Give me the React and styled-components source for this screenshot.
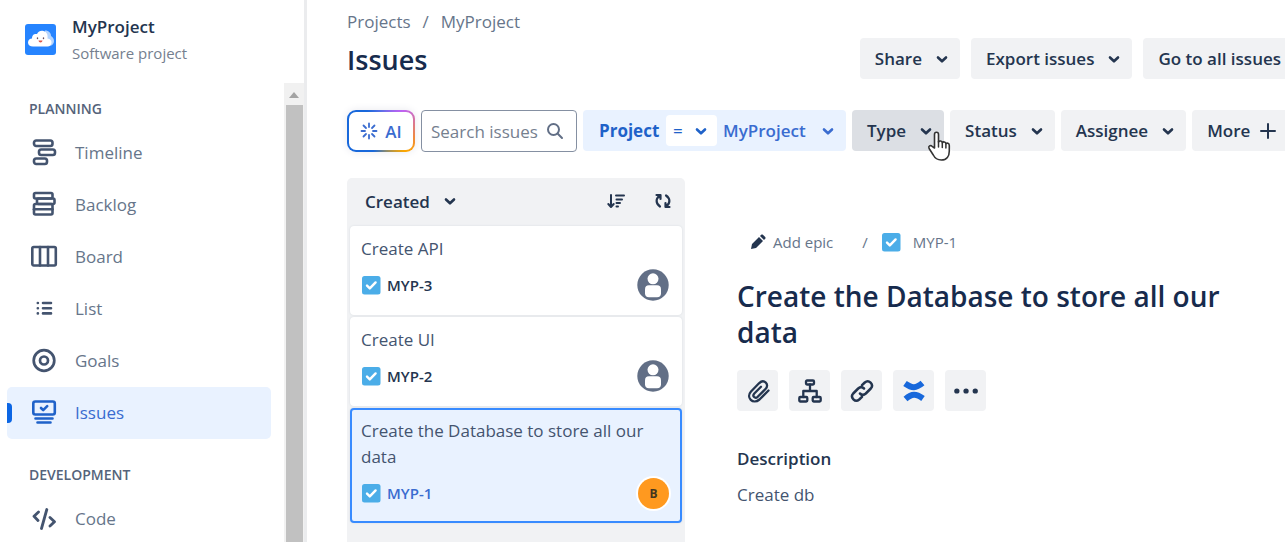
import React from "react"
import styled, { createGlobalStyle } from "styled-components"

const NAVY = "#24354f";
const BLUE = "#1f62c9";
const GREY = "#f1f2f4";

const GlobalStyle = createGlobalStyle`
  * {
    box-sizing: border-box;
  }
  body {
    margin: 0;
    background: #fff;
    color: ${NAVY};
    font-family: "Open Sans", "Noto Sans", sans-serif;
    font-size: 17px;
  }
  button, input {
    font-family: inherit;
    font-size: inherit;
    color: inherit;
  }
  h1, h2, h3, p, ul {
    margin: 0;
    padding: 0;
  }
  svg {
    display: block;
    flex: none;
  }
`;

const Shell = styled.div`
  display: flex;
  height: 100vh;
  overflow: hidden;
`;

/* ---- sidebar ---- */

const Sidebar = styled.aside`
  display: flex;
  flex-direction: column;
  flex: 0 0 307px;
  border-right: 3px solid #ebecee;
`;
const Project_head = styled.div`
  display: flex;
  align-items: center;
  gap: 15px;
  flex: 0 0 83px;
  padding: 0 0 4px 25px;
`;
const Project_name = styled.div`
  font-weight: 600;
  font-size: 17px;
  line-height: 27px;
`;
const Project_kind = styled.div`
  font-size: 15px;
  line-height: 27px;
  color: #75808f;
`;
const Sidebar_body = styled.div`
  display: flex;
  flex: 1;
  min-height: 0;
`;
const Nav = styled.nav`
  flex: 1;
  padding: 0 13px 0 7px;
  overflow: hidden;
`;
const Nav_heading = styled.h3`
  padding: ${props => props.$first ? 16 : 26}px 0 8px 22px;
  font-size: 14px;
  line-height: 20px;
  font-weight: 600;
  color: #55637a;
  text-transform: uppercase;
`;
const Nav_link = styled.a`
  position: relative;
  display: flex;
  align-items: center;
  gap: 17px;
  height: 52px;
  padding: 0 0 2px 23px;
  border-radius: 5px;
  text-decoration: none;
  color: ${props => props.$active ? "#3a6cd0" : "#66758a"};
  background: ${props => props.$active ? "#e9f2ff" : "transparent"};
  svg {
    color: ${props => props.$active ? BLUE : "#44546f"};
  }
  &::before {
    content: "";
    display: ${props => props.$active ? "block" : "none"};
    position: absolute;
    left: 0;
    top: 16px;
    width: 5px;
    height: 20px;
    border-radius: 0 4px 4px 0;
    background: #0c66e4;
  }
`;
const Scrollbar = styled.div`
  display: flex;
  flex-direction: column;
  align-items: center;
  flex: 0 0 20px;
  background: #f1f1f1;
`;
const Scroll_up = styled.div`
  flex: 0 0 22px;
  padding-top: 9px;
`;
const Scroll_thumb = styled.div`
  flex: 1;
  width: 17px;
  background: #c1c1c1;
`;

/* ---- main area ---- */

const Main = styled.main`
  flex: 1;
  min-width: 0;
  overflow: hidden;
`;
const Page = styled.div`
  display: flex;
  flex-direction: column;
  min-width: 990px;
  height: 100%;
  padding-left: 40px;
`;
const Head = styled.header`
  display: flex;
  justify-content: space-between;
  align-items: flex-start;
`;
const Crumbs = styled.div`
  display: flex;
  gap: 12px;
  padding-top: 10px;
  line-height: 24px;
  color: #66758a;
  a {
    color: inherit;
    text-decoration: none;
  }
`;
const Page_title = styled.h1`
  padding-top: 8px;
  font-size: 27px;
  line-height: 36px;
  font-weight: 600;
  color: #172b4d;
`;
const Actions = styled.div`
  display: flex;
  gap: 11px;
  padding-top: 38px;
`;
const Button = styled.button`
  display: flex;
  align-items: center;
  gap: 10px;
  height: 41px;
  padding: 0 ${props => props.$plain ? 16 : 8}px 0 15px;
  border: 0;
  border-radius: 4px;
  background: ${props => props.$pressed ? "#dcdfe4" : GREY};
  font-weight: 600;
  white-space: nowrap;
`;
const Filters = styled.div`
  display: flex;
  gap: 6px;
  padding-top: 31px;
`;
const Ai_button = styled.button`
  display: flex;
  align-items: center;
  justify-content: center;
  gap: 7px;
  width: 68px;
  height: 42px;
  padding: 0;
  border: 2px solid transparent;
  border-radius: 9px;
  background:
    linear-gradient(#fff, #fff) padding-box,
    conic-gradient(from 0deg, #5a6fe8, #bf63f3 13%, #f0883e 28%, #fca700 36%, #8a8a70 46%, #1868db 56%, #1868db 90%, #5a6fe8) border-box;
  box-shadow: 0 0 8px #e8e8ee;
  color: #3a6cd0;
  font-weight: 600;
`;
const Search_box = styled.label`
  display: flex;
  align-items: center;
  width: 156px;
  height: 42px;
  padding: 0 12px 0 9px;
  border: 1px solid #8590a2;
  border-radius: 4px;
  color: #626f86;
`;
const Search_input = styled.input`
  flex: 1;
  width: 0;
  padding: 0;
  border: 0;
  outline: 0;
  background: none;
  &::placeholder {
    color: #75808f;
    opacity: 1;
  }
`;
const Project_filter = styled.div`
  display: flex;
  align-items: center;
  width: 263px;
  height: 41px;
  padding: 0 8px 0 16px;
  border-radius: 4px;
  background: #e9f2ff;
  color: ${BLUE};
`;
const Filter_name = styled.span`
  flex: 1;
  font-weight: 700;
`;
const Operator = styled.button`
  display: flex;
  align-items: center;
  justify-content: space-between;
  width: 51px;
  height: 31px;
  padding: 0 6px 0 7px;
  border: 0;
  border-radius: 4px;
  background: #fff;
`;
const Filter_value = styled.button`
  display: flex;
  align-items: center;
  justify-content: space-between;
  width: 121px;
  padding: 0 0 0 6px;
  border: 0;
  background: none;
  font-weight: 600;
  color: #3a6cd0;
`;
const Cursor_holder = styled.div`
  position: relative;
  display: flex;
`;
const Cursor = styled.svg`
  position: absolute;
  left: 75px;
  top: 20px;
  pointer-events: none;
`;

const Content = styled.div`
  display: flex;
  flex: 1;
  gap: 52px;
  min-height: 0;
  padding-top: 26px;
`;
const List = styled.section`
  flex: 0 0 338px;
  padding: 0 3px;
  border-radius: 5px 5px 0 0;
  background: ${GREY};
`;
const List_head = styled.div`
  display: flex;
  align-items: center;
  gap: 28px;
  height: 48px;
  padding: 0 10px 2px 15px;
`;
const Sort_button = styled.button`
  display: flex;
  align-items: center;
  gap: 10px;
  margin-right: auto;
  padding: 0;
  border: 0;
  background: none;
  font-weight: 600;
`;
const Icon_button = styled.button`
  display: flex;
  padding: 0;
  border: 0;
  background: none;
`;
const Cards = styled.ul`
  display: flex;
  flex-direction: column;
  gap: 2px;
  list-style: none;
`;
const Card = styled.li`
  padding: 8px 11px 12px 9px;
  border: 2px solid ${props => props.$selected ? "#388bff" : "#fff"};
  border-radius: 4px;
  background: ${props => props.$selected ? "#e9f2ff" : "#fff"};
  box-shadow: 0 0 2px #d5d8dd;
`;
const Card_title = styled.div`
  margin-bottom: 7px;
  line-height: 26px;
  color: #44546f;
`;
const Card_foot = styled.div`
  display: flex;
  align-items: center;
  gap: 6px;
  height: 32px;
  padding-left: 1px;
`;
const Card_key = styled.a`
  flex: 1;
  font-size: 15px;
  font-weight: 600;
  text-decoration: none;
  color: ${props => props.$selected ? "#3a6cd0" : NAVY};
`;
const Initial = styled.span`
  width: 31px;
  height: 31px;
  border-radius: 50%;
  background: #ff991f;
  box-shadow: 0 0 0 2px #fff;
  text-align: center;
  font-size: 12px;
  line-height: 31px;
  font-weight: 700;
  color: #44361f;
`;

const Detail = styled.article`
  flex: 1;
  min-width: 0;
  padding: 52px 48px 0 0;
`;
const Detail_path = styled.div`
  display: flex;
  align-items: center;
  height: 24px;
  padding-left: 13px;
  font-size: 15px;
  color: #66758a;
  a {
    margin-left: 12px;
    color: inherit;
    text-decoration: none;
  }
`;
const Add_epic = styled.button`
  display: flex;
  align-items: center;
  gap: 7px;
  padding: 0;
  border: 0;
  background: none;
  svg {
    color: ${NAVY};
  }
`;
const Slash = styled.span`
  margin: 0 14px 0 29px;
`;
const Detail_title = styled.h2`
  padding-top: 24px;
  font-size: 28px;
  line-height: 36px;
  font-weight: 600;
  color: #172b4d;
`;
const Tools = styled.div`
  display: flex;
  gap: 11px;
  padding-top: 20px;
`;
const Tool = styled.button`
  display: flex;
  align-items: center;
  justify-content: center;
  width: 41px;
  height: 41px;
  padding: 0;
  border: 0;
  border-radius: 4px;
  background: ${GREY};
  color: ${props => props.$blue ? "#1868db" : NAVY};
`;
const Label = styled.h3`
  padding-top: 36px;
  font-size: 17px;
  line-height: 24px;
  font-weight: 600;
`;
const Description = styled.p`
  padding-top: 12px;
  line-height: 24px;
  color: #44546f;
`;

/* ---- icons ---- */

const Icon = ({ size = 28, w = 2.4, cap = "round", children }) => (
  <svg width={size} height={size} viewBox={`0 0 ${size} ${size}`} fill="none" stroke="currentColor"
    strokeWidth={w} strokeLinecap={cap} strokeLinejoin="round" aria-hidden="true">
    {children}
  </svg>
)

const Chevron = () => (
  <Icon size={20} w={2.6}><path d="M6 8.5l4 3.8 4-3.8" /></Icon>
)

const TaskIcon = () => (
  <svg width="19" height="19" viewBox="0 0 19 19" aria-hidden="true">
    <rect width="18.5" height="18.5" rx="2.5" fill="#4bade8" />
    <path d="M5 9.600l2.800 2.800 5.800-6" fill="none" stroke="#fff" strokeWidth="2.400" strokeLinecap="round" strokeLinejoin="round" />
  </svg>
)

const ProjectLogo = () => (
  <svg width="32" height="32" viewBox="0 0 32 32" aria-hidden="true">
    <rect width="31" height="31" rx="3" fill="#2684ff" />
    <path d="M20 6.500c4 0 6 2.500 6 5.500 2 1 3 3 3 5s-1.500 5-5 5h-6z" fill="#b3d4ff" />
    <path d="M8 22.500c-3 0-5-1.500-5-4s2-4 4-4c0-4 2.500-5 5-4.500 1.500-3 4-3.700 6.500-3 3.500 1 4.500 4 4 7.500 3 .5 4 2 4 4s-1.500 4-4 4z" fill="#fff" />
    <path d="M12.500 14v.5M18.500 14v.5" stroke="#6b5060" strokeWidth="1.400" strokeLinecap="round" />
    <path d="M13.500 16.500h4c-.2 2.500-3.800 2.500-4 0z" fill="#de5548" />
  </svg>
)

const Person = () => (
  <svg width="32" height="32" viewBox="0 0 32 32" aria-hidden="true">
    <circle cx="16" cy="16" r="15.700" fill="#626f86" />
    <circle cx="16" cy="9.800" r="5.500" fill="#fff" />
    <rect x="8" y="16.300" width="16" height="12" rx="4" fill="#fff" />
  </svg>
)

const navIcons = {
  Timeline: <Icon w={2.6}>
    <rect x="4" y="2.500" width="18.500" height="5.500" rx="2.200" />
    <rect x="9" y="11.500" width="16" height="5.500" rx="2.200" />
    <rect x="4" y="20.500" width="13" height="5.500" rx="2.200" />
  </Icon>,
  Backlog: <Icon w={2.6}>
    <rect x="4" y="3" width="18.500" height="5.500" rx="1.500" />
    <rect x="7" y="8.500" width="17.500" height="5.500" rx="1.500" />
    <rect x="4" y="14" width="18.500" height="10.500" rx="1.500" />
    <path d="M4 19.200h18.500" />
  </Icon>,
  Board: <Icon w={2.6}>
    <rect x="2.300" y="5" width="23.500" height="18.500" rx="1.500" />
    <path d="M10 5v18.500M18 5v18.500" />
  </Icon>,
  List: <Icon w={2.6}>
    <path d="M13 9h8M13 14.200h8M13 19.400h8M7.800 9h.1M7.800 14.200h.1M7.800 19.400h.1" />
  </Icon>,
  Goals: <Icon w={2.7}>
    <circle cx="14" cy="14.500" r="10.300" />
    <circle cx="14" cy="14.500" r="4" />
  </Icon>,
  Issues: <Icon w={2.6}>
    <rect x="3.300" y="3.500" width="21.500" height="13" rx="2" />
    <path d="M11 10l2.200 2.200 4-4M5.500 20.500h17M7.500 24.500h13" />
  </Icon>,
  Code: <Icon w={2.8}>
    <path d="M8.500 8L4 12.300l4 4.200M20 13.500l4.500 4.200-4.500 4.300M16.800 5.500l-5.300 19" />
  </Icon>,
}

const NavItem = ({ name, active }) => (
  <Nav_link href={"#" + name.toLowerCase()} $active={active} aria-current={active ? "page" : undefined}>
    {navIcons[name]}
    {name}
  </Nav_link>
)

const HandCursor = () => (
  <Cursor width="26" height="32" viewBox="0 0 26 32" aria-hidden="true">
    <path d="M7.500 18V4.500c0-3 4-3 4 0V12c.8-1.500 3.500-1.200 3.800.7.900-1.300 3.300-.9 3.600 1 1-1 3.400-.6 3.400 1.700V21c0 5-2.500 9-8 9-4.500 0-6.500-2-8-5l-4.200-6.500c-1.200-2.300 1.400-3.800 3-2.200z"
      fill="#fff" stroke="#333" strokeWidth="1.600" strokeLinejoin="round" />
    <path d="M11.500 11.500V17M15.300 13v4.500M18.900 14v4" stroke="#333" strokeWidth="1.500" strokeLinecap="round" />
  </Cursor>
)

const issues = [
  { key: "MYP-3", title: "Create API" },
  { key: "MYP-2", title: "Create UI" },
  { key: "MYP-1", title: "Create the Database to store all our data", selected: true, initial: "B" },
]

const IssueCard = ({ issue }) => (
  <Card $selected={issue.selected}>
    <Card_title>{issue.title}</Card_title>
    <Card_foot>
      <TaskIcon />
      <Card_key href={"#" + issue.key} $selected={issue.selected}>{issue.key}</Card_key>
      {issue.initial ? <Initial>{issue.initial}</Initial> : <Person />}
    </Card_foot>
  </Card>
)

const App = () => (
  <Shell>
    <GlobalStyle />
    <Sidebar>
      <Project_head>
        <ProjectLogo />
        <div>
          <Project_name>MyProject</Project_name>
          <Project_kind>Software project</Project_kind>
        </div>
      </Project_head>
      <Sidebar_body>
        <Nav>
          <Nav_heading $first>Planning</Nav_heading>
          {["Timeline", "Backlog", "Board", "List", "Goals"].map(name => <NavItem key={name} name={name} />)}
          <NavItem name="Issues" active />
          <Nav_heading>Development</Nav_heading>
          <NavItem name="Code" />
        </Nav>
        <Scrollbar>
          <Scroll_up>
            <svg width="10" height="6" viewBox="0 0 10 6" aria-hidden="true"><path d="M0 6l5-6 5 6z" fill="#a3a3a3" /></svg>
          </Scroll_up>
          <Scroll_thumb />
        </Scrollbar>
      </Sidebar_body>
    </Sidebar>

    <Main>
      <Page>
        <Head>
          <div>
            <Crumbs>
              <a href="#projects">Projects</a>
              <span>/</span>
              <a href="#myproject">MyProject</a>
            </Crumbs>
            <Page_title>Issues</Page_title>
          </div>
          <Actions>
            <Button>Share<Chevron /></Button>
            <Button>Export issues<Chevron /></Button>
            <Button $plain>Go to all issues</Button>
          </Actions>
        </Head>

        <Filters>
          <Ai_button>
            <Icon size={18} w={1.8}>
              <path d="M9 1.500v3.500M9 13v3.500M1.500 9H5M13 9h3.500M3.500 3.500L6 6M12 12l2.500 2.500M14.500 3.500L12 6M6 12l-2.500 2.500" />
            </Icon>
            AI
          </Ai_button>
          <Search_box>
            <Search_input type="text" placeholder="Search issues" aria-label="Search issues" />
            <Icon size={18} w={2}><circle cx="7.500" cy="7.500" r="5.500" /><path d="M11.800 11.800l4.200 4.200" /></Icon>
          </Search_box>
          <Project_filter>
            <Filter_name>Project</Filter_name>
            <Operator>=<Chevron /></Operator>
            <Filter_value>MyProject<Chevron /></Filter_value>
          </Project_filter>
          <Cursor_holder>
            <Button $pressed>Type<Chevron /></Button>
            <HandCursor />
          </Cursor_holder>
          <Button>Status<Chevron /></Button>
          <Button>Assignee<Chevron /></Button>
          <Button $plain>
            More
            <Icon size={16} w={2}><path d="M8 1v14M1 8h14" /></Icon>
          </Button>
        </Filters>

        <Content>
          <List>
            <List_head>
              <Sort_button>Created<Chevron /></Sort_button>
              <Icon_button aria-label="Sort order">
                <Icon size={20} w={2}>
                  <path d="M5 4v11M2.300 13l2.700 3 2.700-3M10 4.500h8M10.500 8.500h5.500M10.500 12h3.500M10.500 15.500h1.500" />
                </Icon>
              </Icon_button>
              <Icon_button aria-label="Refresh">
                <Icon size={18} w={2.2}>
                  <path d="M6 14.500c-4.500-3-4.500-8 0-11M2.500 3h4v4M12 3.500c4.500 3 4.500 8 0 11M15.500 15h-4v-4" />
                </Icon>
              </Icon_button>
            </List_head>
            <Cards>
              {issues.map(issue => <IssueCard key={issue.key} issue={issue} />)}
            </Cards>
          </List>

          <Detail>
            <Detail_path>
              <Add_epic>
                <svg width="16" height="16" viewBox="0 0 16 16" fill="currentColor" aria-hidden="true">
                  <path d="M1 15l1-5 7-7 4 4-7 7zM10 2l1.200-1.200c.5-.5 1.200-.5 1.700 0l2.300 2.300c.5.5.5 1.200 0 1.700L14 6z" />
                </svg>
                Add epic
              </Add_epic>
              <Slash>/</Slash>
              <TaskIcon />
              <a href="#MYP-1">MYP-1</a>
            </Detail_path>
            <Detail_title>Create the Database to store all our data</Detail_title>
            <Tools>
              <Tool aria-label="Attach">
                <Icon size={26} w={2.3}>
                  <path d="M23.500 12.500l-9 9c-6.500 5.500-14-2-8.500-8l8-8.200c5-4.800 11 1 6.500 5.700l-7.800 7.800c-2.700 2.300-5.800-.6-3.400-3.300l6.700-6.800" />
                </Icon>
              </Tool>
              <Tool aria-label="Add child issue">
                <Icon size={26} w={2.3}>
                  <rect x="9" y="2.500" width="8" height="4" rx="1" />
                  <rect x="2.300" y="19" width="8" height="4.500" rx="1" />
                  <rect x="15.700" y="19" width="8" height="4.500" rx="1" />
                  <path d="M13 6.500V13M6.300 19v-6h13.400v6" />
                </Icon>
              </Tool>
              <Tool aria-label="Link issue">
                <Icon size={26} w={2.5}>
                  <path d="M11 15.500c1.800 1.800 4.200 1.500 5.800 0l5-5c3.500-4-2-9.500-6-6L13 7.200" />
                  <path d="M15 10.500c-1.800-1.800-4.200-1.500-5.800 0l-5 5c-3.500 4 2 9.500 6 6L13 18.800" />
                </Icon>
              </Tool>
              <Tool $blue aria-label="Confluence">
                <Icon size={26} w={6} cap="butt">
                  <path d="M4 5.500c7 5 11 5 17.500-.5M22 20.500c-7-5-11-5-17.500.5" />
                </Icon>
              </Tool>
              <Tool aria-label="More actions">
                <Icon size={26} w={5.2}><path d="M3.800 13h.1M13 13h.1M22.200 13h.1" /></Icon>
              </Tool>
            </Tools>
            <Label>Description</Label>
            <Description>Create db</Description>
          </Detail>
        </Content>
      </Page>
    </Main>
  </Shell>
)

export default App;
